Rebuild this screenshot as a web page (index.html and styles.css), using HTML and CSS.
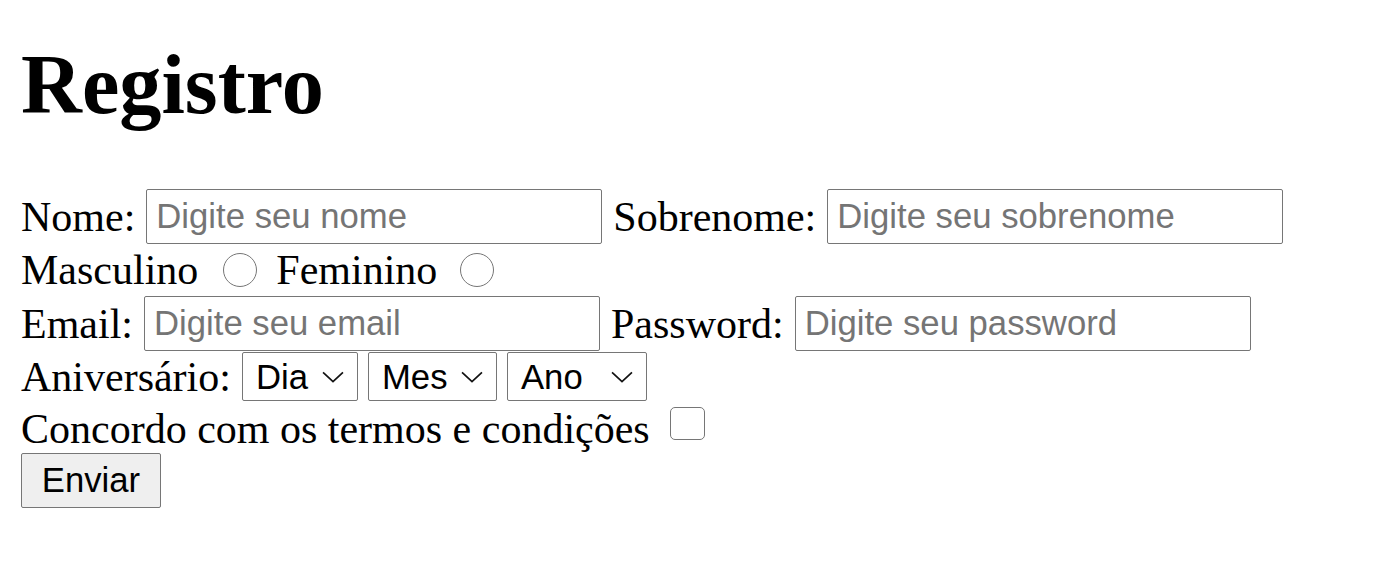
FILE: index.html
```html
<!DOCTYPE html>
<html lang="pt">
<head>
<meta charset="utf-8">
<title>Registro</title>
<link rel="stylesheet" href="styles.css">
</head>
<body>
<div class="page">
  <h1 class="title">Registro</h1>
  <form class="form">
    <div class="row row-1">
      <label class="lbl" for="nome">Nome:</label>
      <input class="field" id="nome" type="text" placeholder="Digite seu nome">
      <label class="lbl" for="sobrenome">Sobrenome:</label>
      <input class="field" id="sobrenome" type="text" placeholder="Digite seu sobrenome">
    </div>
    <div class="row row-2">
      <label class="lbl" for="masc">Masculino</label>
      <span class="radio radio-m"></span>
      <label class="lbl" for="fem">Feminino</label>
      <span class="radio radio-f"></span>
    </div>
    <div class="row row-3">
      <label class="lbl" for="email">Email:</label>
      <input class="field" id="email" type="text" placeholder="Digite seu email">
      <label class="lbl" for="pass">Password:</label>
      <input class="field" id="pass" type="text" placeholder="Digite seu password">
    </div>
    <div class="row row-4">
      <label class="lbl">Aniversário:</label>
      <span class="sel sel-dia"><span class="sel-text">Dia</span><svg class="chev" viewBox="0 0 21 11"><path d="M1 1 L10.5 10 L20 1" fill="none" stroke="#111" stroke-width="1.6"/></svg></span>
      <span class="sel sel-mes"><span class="sel-text">Mes</span><svg class="chev" viewBox="0 0 21 11"><path d="M1 1 L10.5 10 L20 1" fill="none" stroke="#111" stroke-width="1.6"/></svg></span>
      <span class="sel sel-ano"><span class="sel-text">Ano</span><svg class="chev" viewBox="0 0 21 11"><path d="M1 1 L10.5 10 L20 1" fill="none" stroke="#111" stroke-width="1.6"/></svg></span>
    </div>
    <div class="row row-5">
      <label class="lbl">Concordo com os termos e condições</label>
      <span class="check"></span>
    </div>
    <div class="row row-6">
      <span class="btn">Enviar</span>
    </div>
  </form>
</div>
</body>
</html>
```

FILE: styles.css
```css
html, body {
  margin: 0;
  padding: 0;
  background: #ffffff;
}

.page {
  padding: 36px 21px 0;
  font-family: "Liberation Serif", "Times New Roman", serif;
  font-size: 42px;
  color: #000;
}

.title {
  margin: 0 0 56px;
  font-size: 84.3px;
  font-weight: bold;
  line-height: normal;
}

.form {
  display: flex;
  flex-direction: column;
}

.row {
  display: flex;
  align-items: center;
  column-gap: 11px;
}

.row-1 { height: 55px; }
.row-2 { height: 52px; }
.row-3 { height: 55px; }
.row-4 { height: 51px; column-gap: 10px; }
.row-5 { height: 51px; }
.row-6 { height: 55px; }

.lbl {
  white-space: nowrap;
  line-height: normal;
}

.row-5 .lbl { margin-top: 3px; }

.row-4 .lbl { margin-right: 1px; }

.field {
  box-sizing: border-box;
  width: 456px;
  height: 55px;
  margin: 0;
  padding: 0 9px;
  border: 1px solid #767676;
  border-radius: 2px;
  font-family: "Liberation Sans", Arial, sans-serif;
  font-size: 34.7px;
  color: #000;
  background: #fff;
  outline: none;
}

.field::placeholder {
  color: #757575;
  opacity: 1;
}

.radio {
  box-sizing: border-box;
  width: 34px;
  height: 34px;
  border: 1px solid #767676;
  border-radius: 50%;
  background: #fff;
}

.radio-m { margin-left: 14px; margin-right: 8px; }
.radio-f { margin-left: 12px; }

.sel {
  position: relative;
  box-sizing: border-box;
  display: flex;
  align-items: center;
  height: 49px;
  padding-left: 13px;
  padding-top: 2px;
  border: 1px solid #767676;
  border-radius: 2px;
  background: #fff;
  font-family: "Liberation Sans", Arial, sans-serif;
  font-size: 34.7px;
  color: #000;
}

.sel-dia { width: 116px; }
.sel-mes { width: 129px; }
.sel-ano { width: 140px; }

.chev {
  position: absolute;
  right: 13px;
  top: 50%;
  width: 22px;
  height: 12px;
  margin-top: -6px;
}

.check {
  box-sizing: border-box;
  width: 35px;
  height: 33px;
  margin-left: 9px;
  margin-top: -8px;
  border: 1px solid #767676;
  border-radius: 5px;
  background: #fff;
}

.btn {
  box-sizing: border-box;
  display: flex;
  align-items: center;
  justify-content: center;
  width: 140px;
  height: 55px;
  border: 1px solid #767676;
  border-radius: 2px;
  background: #efefef;
  font-family: "Liberation Sans", Arial, sans-serif;
  font-size: 34.7px;
  color: #000;
}
```
